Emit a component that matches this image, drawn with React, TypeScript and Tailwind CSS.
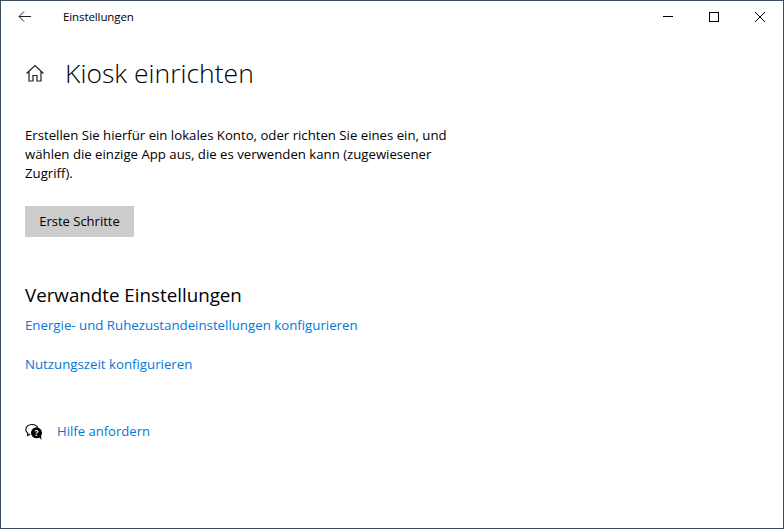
export default function App() {
  return (
    <div className="flex h-[529px] w-[784px] flex-col overflow-hidden border border-[#3c4c5c] bg-white font-['Open_Sans','Noto_Sans',sans-serif] text-black">
      {/* title bar */}
      <div className="flex h-[31px] items-center">
        <button className="flex h-[31px] w-[48px] items-center justify-center pb-[1px]">
          <svg width="16" height="16" viewBox="0 0 16 16" fill="none" stroke="#222" strokeWidth="1">
            <path d="M14 8.500H2M7 3.500l-5 5 5 5" />
          </svg>
        </button>
        <span className="ml-[14px] pt-[1px] text-[11.500px] tracking-[-0.1px]">Einstellungen</span>
        <div className="ml-auto flex">
          <div className="flex h-[31px] w-[46px] items-center justify-center">
            <div className="h-px w-[10px] bg-black" />
          </div>
          <div className="flex h-[31px] w-[46px] items-center justify-center">
            <div className="size-[10px] border border-black" />
          </div>
          <div className="flex h-[31px] w-[46px] items-center justify-center">
            <svg width="10" height="10" viewBox="0 0 10 10" stroke="#000" strokeWidth="1">
              <path d="M0 0 10 10M10 0 0 10" />
            </svg>
          </div>
        </div>
      </div>

      <div className="flex flex-col pl-[24px]">
        {/* page heading */}
        <div className="mt-[21px] flex h-[40px] items-center">
          <svg width="20" height="20" viewBox="0 0 20 20" fill="none" stroke="#222" strokeWidth="1.200">
            <path d="M1.500 10.500 10 2.500l8.500 8M4 8.500V18h4v-5.500h4V18h4V8.500" />
          </svg>
          <h1 className="ml-[20px] text-[26.500px] font-light leading-[40px]">Kiosk einrichten</h1>
        </div>

        <p className="mt-[33px] w-[430px] text-[13.200px] leading-[19px]">
          Erstellen Sie hierfür ein lokales Konto, oder richten Sie eines ein, und wählen die einzige App aus, die es verwenden kann (zugewiesener Zugriff).
        </p>

        <button className="mt-[23px] h-[31px] w-[109px] bg-[#cccccc] pt-[1px] text-[13px]">Erste Schritte</button>

        <h2 className="mt-[44px] text-[18.750px] leading-[28px]">Verwandte Einstellungen</h2>
        <a className="mt-[7px] text-[13.250px] leading-[19px] text-[#0078d7]">Energie- und Ruhezustandeinstellungen konfigurieren</a>
        <a className="mt-[20px] text-[13.250px] leading-[19px] text-[#0078d7]">Nutzungszeit konfigurieren</a>

        <div className="mt-[48px] flex items-center">
          <svg width="18" height="18" viewBox="0 0 18 18">
            <path d="M7 1.500C3.500 1.500 .8 3.700.8 6.400c0 1.500.8 2.800 2 3.700L2.500 12.500l2.800-1.500" fill="none" stroke="#000" strokeWidth="1.100" />
            <path d="M7 1.500c2.800 0 5 1.300 5.800 3.200" fill="none" stroke="#000" strokeWidth="1.100" />
            <circle cx="11.500" cy="9.800" r="5.500" fill="#000" />
            <path d="M14 14l2.500 3-.5-4.500z" fill="#000" />
            <text x="11.500" y="12.800" textAnchor="middle" fontSize="8.500" fontWeight="700" fill="#fff" fontFamily="'Open Sans',sans-serif">?</text>
          </svg>
          <a className="ml-[14px] text-[13.080px] leading-[19px] text-[#0078d7]">Hilfe anfordern</a>
        </div>
      </div>
    </div>
  );
}
